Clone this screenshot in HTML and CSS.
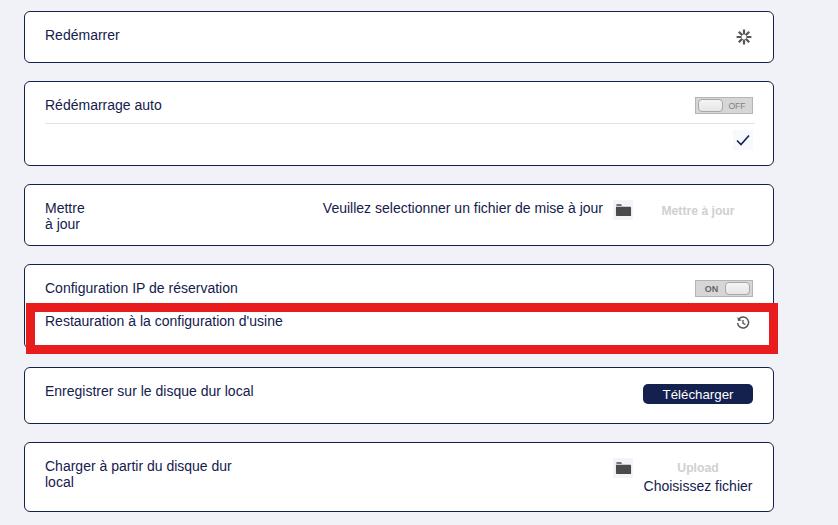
FILE: index.html
```html
<!DOCTYPE html>
<html lang="fr">
<head>
    <meta charset="UTF-8">
    <title>Maintenance</title>
    <link rel="stylesheet" href="styles.css">
</head>
<body>
    <div class="card card-restart">
        <div class="row">
            <span class="label">Redémarrer</span>
            <svg class="icon icon-spin" viewBox="0 0 16 16" width="16" height="16">
                <g stroke="#555" stroke-width="2.2" stroke-linecap="butt">
                    <path d="M8 .6v5M8 10.4v5M.6 8h5M10.4 8h5M2.8 2.8l3.5 3.5M9.7 9.7l3.5 3.5M2.8 13.2L6.3 9.7M9.7 6.3l3.5-3.5"/>
                </g>
            </svg>
        </div>
    </div>

    <div class="card card-auto">
        <div class="row row-auto">
            <span class="label">Rédémarrage auto</span>
            <div class="toggle">
                <span class="knob"></span>
                <span class="toggle-text">OFF</span>
            </div>
        </div>
        <div class="row-save">
            <span class="icon-box icon-box-light">
                <svg viewBox="0 0 16 16" width="16" height="16">
                    <path d="M2 8.5l4 4L14 3.5" fill="none" stroke="#14204d" stroke-width="1.6"/>
                </svg>
            </span>
        </div>
    </div>

    <div class="card card-update">
        <div class="label label-narrow">Mettre à jour</div>
        <div class="update-right">
            <span class="label">Veuillez selectionner un fichier de mise à jour</span>
            <span class="icon-box">
                <svg viewBox="0 0 18 14" width="17" height="14">
                    <path d="M1.5 1h5l1 1.5h-6zM1 3.6h15.5l.5.8V13.4H1.6L1 12.8z" fill="#4a4a4a"/>
                </svg>
            </span>
            <span class="action-disabled">Mettre à jour</span>
        </div>
    </div>

    <div class="card card-reserve">
        <div class="row row-reserve">
            <span class="label">Configuration IP de réservation</span>
            <div class="toggle toggle-on">
                <span class="toggle-text">ON</span>
                <span class="knob"></span>
            </div>
        </div>
        <div class="row row-factory">
            <span class="label">Restauration à la configuration d'usine</span>
            <svg class="icon" viewBox="0 0 16 16" width="14" height="14">
                <path d="M3.4 3.2A6.3 6.3 0 1 1 1.8 8" fill="none" stroke="#555" stroke-width="1.7"/>
                <path d="M1.6 1.2l.6 4.4 4.4-.6z" fill="#555"/>
                <path d="M8 4.5V8.3l2.8 1.4" fill="none" stroke="#555" stroke-width="1.5"/>
            </svg>
        </div>
    </div>

    <div class="card card-save">
        <span class="label">Enregistrer sur le disque dur local</span>
        <button class="btn-primary">Télécharger</button>
    </div>

    <div class="card card-load">
        <div class="label label-load">Charger à partir du disque dur local</div>
        <div class="load-right">
            <span class="icon-box">
                <svg viewBox="0 0 18 14" width="17" height="14">
                    <path d="M1.5 1h5l1 1.5h-6zM1 3.6h15.5l.5.8V13.4H1.6L1 12.8z" fill="#4a4a4a"/>
                </svg>
            </span>
            <div class="upload-col">
                <span class="action-disabled">Upload</span>
                <span class="file-text">Choisissez fichier</span>
            </div>
        </div>
    </div>
</body>
</html>
```

FILE: styles.css
```css
html, body {
    height: 100%;
    overflow: hidden;
}
body {
    margin: 0;
    padding: 11px 0 0 24px;
    box-sizing: border-box;
    background-color: #f0f2f8;
    font-family: "Liberation Sans", Arial, sans-serif;
    font-size: 14px;
    color: #14204d;
}
.card {
    box-sizing: border-box;
    width: 750px;
    margin-bottom: 18px;
    padding: 0 20px;
    background: #fff;
    border: 1px solid #14204d;
    border-radius: 6px;
}
.row {
    display: flex;
    justify-content: space-between;
}
.label {
    line-height: 16px;
}
.icon {
    display: block;
}
.icon-box {
    display: flex;
    align-items: center;
    justify-content: center;
    width: 20px;
    height: 20px;
    background: #f3f4f9;
}
.icon-box-light {
    background: #f8f9fd;
}

/* toggle */
.toggle {
    box-sizing: border-box;
    display: flex;
    align-items: center;
    justify-content: space-between;
    width: 58px;
    height: 17px;
    padding: 0 2px;
    background: #d6d6d6;
    border: 1px solid #b4b4b4;
}
.knob {
    box-sizing: border-box;
    width: 25px;
    height: 13px;
    background: linear-gradient(#f4f4f4, #e6e6e6);
    border: 1px solid #a8a8a8;
    border-radius: 4px;
}
.toggle-text {
    flex: 1;
    padding-left: 1px;
    text-align: center;
    font-size: 8.5px;
    color: #808080;
}
.toggle-on .toggle-text {
    padding-left: 0;
    font-size: 9px;
    font-weight: bold;
    color: #666;
}

/* card rows */
.card-restart {
    height: 52px;
}
.card-restart .row {
    padding-top: 15px;
}
.icon-spin {
    margin: 2px 1px 0 0;
}
.card-auto {
    height: 85px;
    padding-right: 18px;
}
.row-auto {
    height: 42px;
    padding: 15px 2px 0 0;
    box-sizing: border-box;
    border-bottom: 1px solid #e2e2e6;
}
.row-save {
    display: flex;
    justify-content: flex-end;
    padding: 6px 2px 0 0;
}
.card-update {
    display: flex;
    justify-content: space-between;
    height: 62px;
    padding-top: 15px;
}
.label-narrow {
    width: 50px;
}
.update-right {
    display: flex;
    align-items: flex-start;
}
.update-right .icon-box {
    margin-left: 10px;
}
.action-disabled {
    width: 110px;
    text-align: center;
    font-size: 12.2px;
    font-weight: bold;
    line-height: 20px;
    color: #d0d0d0;
}
.update-right .action-disabled {
    margin: 1px 0 0 10px;
}
.card-reserve {
    position: relative;
    z-index: 0;
    height: 85px;
}
.row-reserve {
    padding-top: 15px;
}
.row-factory {
    position: relative;
    margin-top: 15px;
    padding-top: 1px;
}
.row-factory .icon {
    margin: 3px 3px 0 0;
}
/* red annotation drawn over the screenshot */
.row-factory::before {
    content: "";
    position: absolute;
    z-index: -1;
    left: -19px;
    top: -9px;
    width: 752px;
    height: 51px;
    box-sizing: border-box;
    background: #fff;
    border: 9px solid #e81c1c;
}
.card-save {
    display: flex;
    justify-content: space-between;
    height: 57px;
    padding-top: 15px;
}
.btn-primary {
    width: 110px;
    height: 20px;
    margin-top: 1px;
    padding: 0;
    border: none;
    border-radius: 5px;
    background: #14204d;
    color: #fff;
    font-family: inherit;
    font-size: 13.3px;
}
.card-load {
    display: flex;
    justify-content: space-between;
    height: 70px;
    padding-top: 15px;
}
.label-load {
    width: 200px;
}
.load-right {
    display: flex;
    align-items: flex-start;
}
.upload-col {
    display: flex;
    flex-direction: column;
    align-items: center;
    width: 110px;
    margin-left: 10px;
}
.file-text {
    line-height: 16px;
}
```
